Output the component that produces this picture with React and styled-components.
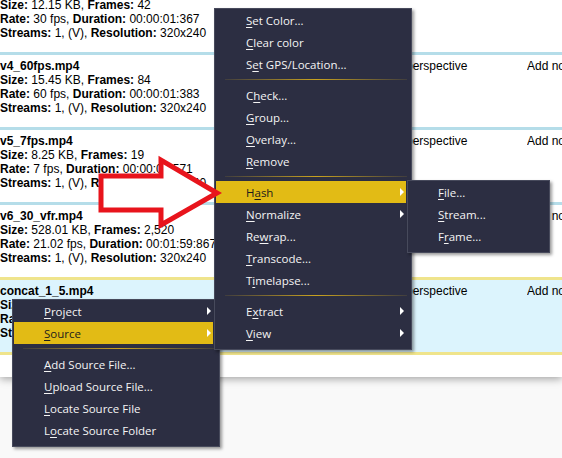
import React from "react";
import styled, { createGlobalStyle } from "styled-components";

const Global = createGlobalStyle`
  html, body { margin: 0; padding: 0; background: #f9f9f9; }
  body { width: 562px; height: 458px; overflow: hidden; position: relative; }
`;

const Page = styled.div`
  position: relative;
  width: 562px;
  height: 458px;
  overflow: hidden;
  background: #f9f9f9;
`;

const Panel = styled.div`
  background: #ffffff;
  padding-bottom: 22px;
  box-shadow: 0 2px 8px rgba(0, 0, 0, 0.35);
  overflow: hidden;
`;

const List = styled.div`
  margin-top: -23px;
`;

const Row = styled.div`
  display: grid;
  grid-template-columns: 406px 121px 1fr;
  height: 72px;
  box-sizing: content-box;
  border-top: 3px solid ${(p) => (p.$selected ? "#efe48c" : "#b5dde9")};
  border-bottom: ${(p) => (p.$selected ? "3px solid #efe48c" : "none")};
  background: ${(p) => (p.$selected ? "#dcf4fd" : "#ffffff")};
  font-family: "Liberation Sans", Arial, sans-serif;
  font-size: 12px;
  line-height: 14px;
  color: #000;
  white-space: nowrap;
  overflow: hidden;
`;

const Info = styled.div`
  padding-top: 4px;
  overflow: hidden;
`;

const Line = styled.div`
  height: 14px;
`;

const FileName = styled(Line)`
  font-weight: bold;
`;

const Label = styled.b`
  font-weight: bold;
`;

const Cell = styled.div`
  padding-top: 4px;
  overflow: hidden;
`;

const MenuBox = styled.div`
  position: absolute;
  left: ${(p) => p.$x}px;
  top: ${(p) => p.$y}px;
  width: ${(p) => p.$w}px;
  box-sizing: border-box;
  background: #2c2e42;
  border: 1px solid #474a5c;
  padding-bottom: ${(p) => p.$pb}px;
  box-shadow: 2px 2px 3px rgba(0, 0, 0, 0.4);
  font-family: "Open Sans", "Noto Sans", sans-serif;
  font-size: 11.5px;
  color: #f4f4f4;
  z-index: ${(p) => p.$z};
`;

const ItemRow = styled.div`
  position: relative;
  height: 22px;
  display: flex;
  align-items: center;
  margin: 0 ${(p) => p.$mr}px 0 1px;
  padding-left: ${(p) => p.$pl}px;
  background: ${(p) => (p.$active ? "#e2bb15" : "transparent")};
  color: ${(p) => (p.$active ? "#1c1c1c" : "#f4f4f4")};
  white-space: nowrap;
`;

const Mn = styled.span`
  text-decoration: underline;
  text-underline-offset: 2px;
  text-decoration-thickness: 1px;
`;

const Caret = styled.span`
  position: absolute;
  right: 2px;
  top: 7px;
  width: 0;
  height: 0;
  border-top: 4px solid transparent;
  border-bottom: 4px solid transparent;
  border-left: 4px solid #ffffff;
`;

const Sep = styled.div`
  height: 9px;
  display: flex;
  align-items: center;
  padding: 0 4px 0 10px;
  &::after {
    content: "";
    flex: 1;
    height: 1px;
    background: linear-gradient(
      to right,
      rgba(180, 150, 40, 0.15),
      #c9a21f 50%,
      rgba(180, 150, 40, 0.15)
    );
  }
`;

const ArrowSvg = styled.svg`
  position: absolute;
  left: 96px;
  top: 154px;
  z-index: 10;
  overflow: visible;
`;

function MenuItem({ label, arrow, active, pl = 30, mr = 5 }) {
  const i = label.indexOf("&");
  const before = label.slice(0, i);
  const m = label.charAt(i + 1);
  const after = label.slice(i + 2);
  return (
    <ItemRow $active={active} $pl={pl} $mr={mr}>
      <span>
        {before}
        <Mn>{m}</Mn>
        {after}
      </span>
      {arrow && <Caret />}
    </ItemRow>
  );
}

const rows = [
  { name: "v3_30fps.mp4", size: "12.15 KB", frames: "42", rate: "30 fps", dur: "00:00:01:367" },
  { name: "v4_60fps.mp4", size: "15.45 KB", frames: "84", rate: "60 fps", dur: "00:00:01:383", persp: true },
  { name: "v5_7fps.mp4", size: "8.25 KB", frames: "19", rate: "7 fps", dur: "00:00:02:571", persp: true },
  { name: "v6_30_vfr.mp4", size: "528.01 KB", frames: "2,520", rate: "21.02 fps", dur: "00:01:59:867", persp: true },
  { name: "concat_1_5.mp4", size: "45.20 KB", frames: "145", rate: "30 fps", dur: "00:00:04:833", persp: true, selected: true },
];

const mainMenu = [
  { l: "&Set Color..." },
  { l: "&Clear color" },
  { l: "S&et GPS/Location..." },
  "sep",
  { l: "C&heck..." },
  { l: "&Group..." },
  { l: "&Overlay..." },
  { l: "&Remove" },
  "sep",
  { l: "H&ash", arrow: true, active: true },
  { l: "&Normalize", arrow: true },
  { l: "Re&wrap..." },
  { l: "&Transcode..." },
  { l: "T&imelapse..." },
  "sep",
  { l: "E&xtract", arrow: true },
  { l: "&View", arrow: true },
];

const leftMenu = [
  { l: "&Project", arrow: true },
  { l: "&Source", arrow: true, active: true },
  "sep",
  { l: "&Add Source File..." },
  { l: "&Upload Source File..." },
  { l: "&Locate Source File" },
  { l: "L&ocate Source Folder" },
];

const hashMenu = [{ l: "&File..." }, { l: "&Stream..." }, { l: "F&rame..." }];

function Menu({ items, x, y, w, pb, z, pl, mr }) {
  return (
    <MenuBox $x={x} $y={y} $w={w} $pb={pb} $z={z}>
      {items.map((it, k) =>
        it === "sep" ? (
          <Sep key={k} />
        ) : (
          <MenuItem key={k} label={it.l} arrow={it.arrow} active={it.active} pl={pl} mr={mr} />
        )
      )}
    </MenuBox>
  );
}

export default function App() {
  return (
    <Page>
      <Global />
      <Panel>
        <List>
          {rows.map((r) => (
            <Row key={r.name} $selected={r.selected}>
              <Info>
                <FileName>{r.name}</FileName>
                <Line>
                  <Label>Size:</Label> {r.size}, <Label>Frames:</Label> {r.frames}
                </Line>
                <Line>
                  <Label>Rate:</Label> {r.rate}, <Label>Duration:</Label> {r.dur}
                </Line>
                <Line>
                  <Label>Streams:</Label> 1, (V), <Label>Resolution:</Label> 320x240
                </Line>
              </Info>
              <Cell>{r.persp ? "perspective" : ""}</Cell>
              <Cell>{r.persp ? "Add note" : ""}</Cell>
            </Row>
          ))}
        </List>
      </Panel>

      <Menu items={leftMenu} x={12} y={299} w={208} pb={5} z={2} pl={30} mr={6} />
      <Menu items={mainMenu} x={214} y={8} w={198} pb={5} z={3} pl={30} mr={5} />
      <Menu items={hashMenu} x={407} y={180} w={143} pb={5} z={4} pl={29} mr={5} />

      <ArrowSvg width="130" height="78" viewBox="0 0 130 78">
        <polygon
          points="5,22 65,22 65,6 121,39 65,71 65,56 5,56"
          fill="#ffffff"
          stroke="#e8141c"
          strokeWidth="5"
          strokeLinejoin="miter"
        />
      </ArrowSvg>
    </Page>
  );
}
